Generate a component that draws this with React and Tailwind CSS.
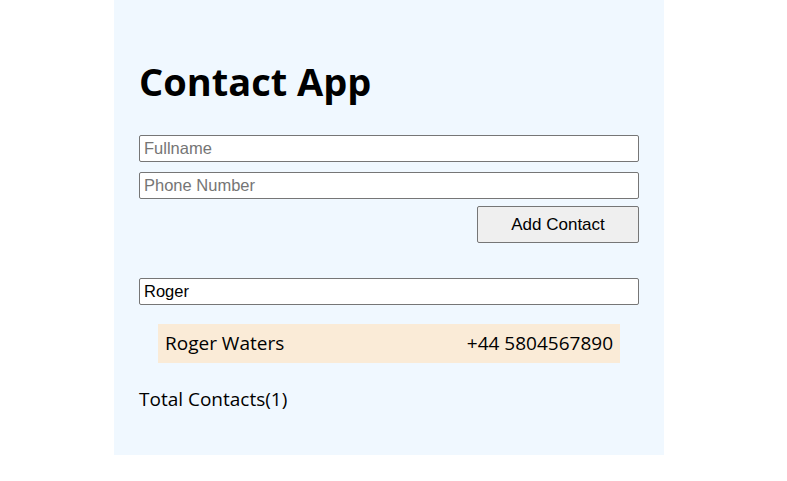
export default function App() {
    return (
        <div className="min-h-screen bg-white">
            <div className="ml-[114px] w-[550px] h-[455px] bg-[#f0f8ff] px-[25px] pt-[53px] font-['Open_Sans',sans-serif] text-black">
                <h1 className="text-[38px] font-bold leading-[56px] mb-[26px]">
                    Contact App
                </h1>
                {/* add form */}
                <div className="flex flex-col gap-[10px]">
                    <input
                        className="w-[500px] h-[27px] border border-[#767676] rounded-[2px] bg-white px-[4px] text-[16.5px] font-['Liberation_Sans',sans-serif] placeholder:text-[#757575]"
                        placeholder="Fullname"
                    />
                    <input
                        className="w-[500px] h-[27px] border border-[#767676] rounded-[2px] bg-white px-[4px] text-[16.5px] font-['Liberation_Sans',sans-serif] placeholder:text-[#757575]"
                        placeholder="Phone Number"
                    />
                </div>
                <div className="flex justify-end w-[500px] mt-[7px]">
                    <button className="w-[162px] h-[37px] border border-[#767676] rounded-[2px] bg-[#efefef] text-[17px] font-['Liberation_Sans',sans-serif]">
                        Add Contact
                    </button>
                </div>
                {/* search */}
                <input
                    className="mt-[35px] w-[500px] h-[27px] border border-[#767676] rounded-[2px] bg-white px-[4px] text-[16.5px] font-['Liberation_Sans',sans-serif]"
                    defaultValue="Roger"
                />
                <ul className="mt-[19px] ml-[19px] w-[462px]">
                    <li className="flex justify-between items-center h-[39px] bg-[#faebd7] px-[7px] text-[19px]">
                        <span>Roger Waters</span>
                        <span>+44 5804567890</span>
                    </li>
                </ul>
                <p className="mt-[22px] text-[19px]">Total Contacts(1)</p>
            </div>
        </div>
    );
}
